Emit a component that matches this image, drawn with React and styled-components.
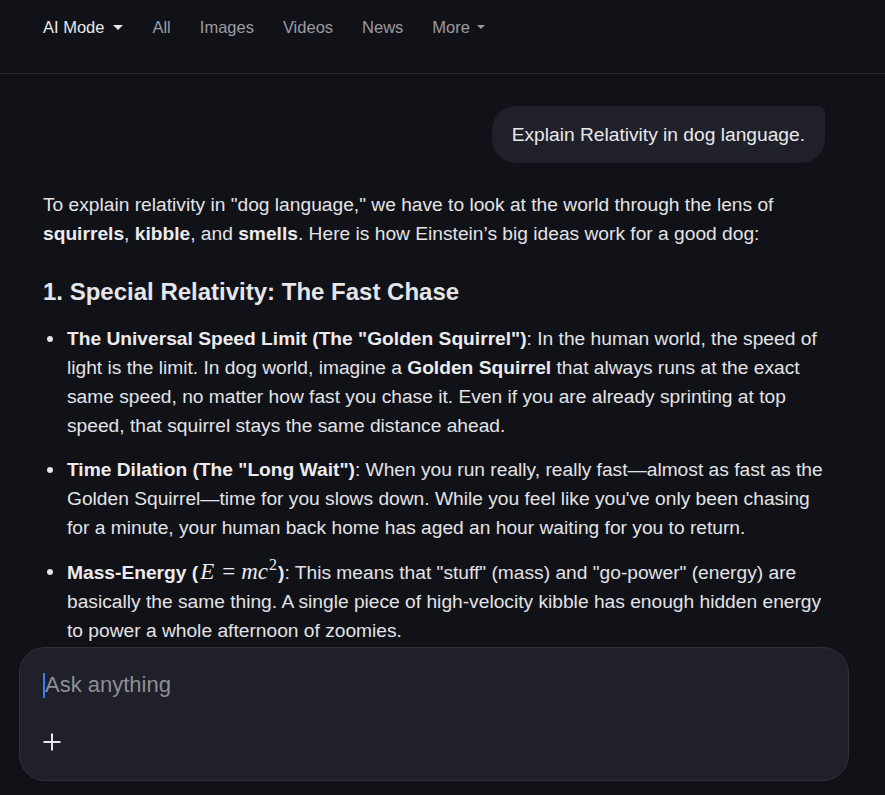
import React from "react";
import styled, { createGlobalStyle } from "styled-components";

const Global = createGlobalStyle`
    html, body {
        margin: 0;
        padding: 0;
        background: #111217;
    }
    body {
        font-family: "Liberation Sans", Arial, sans-serif;
        color: #e6e6ea;
    }
`;

const Page = styled.div`
    display: flex;
    flex-direction: column;
    height: 795px;
    overflow: hidden;
    background: #111217;
`;

const Nav = styled.nav`
    flex: none;
    display: flex;
    align-items: center;
    gap: 29px;
    height: 54px;
    padding: 0 43px 19px;
    border-bottom: 1px solid #2c2d33;
`;

const NavItem = styled.span`
    display: inline-flex;
    align-items: center;
    gap: 7px;
    font-size: 16.5px;
    color: ${p => p.active ? '#e8e8ec' : '#9b9ca3'};
    cursor: pointer;
`;

const Caret = styled.span`
    width: 0;
    height: 0;
    border-left: ${p => p.small ? 4 : 5}px solid transparent;
    border-right: ${p => p.small ? 4 : 5}px solid transparent;
    border-top: ${p => p.small ? 4 : 5}px solid currentColor;
    margin-left: ${p => p.small ? 0 : 2}px;
`;

const Main = styled.main`
    flex: 1;
    overflow: hidden;
    padding: 32px 60px 0 43px;
    display: flex;
    flex-direction: column;
`;

const Bubble = styled.div`
    align-self: flex-end;
    background: #1f2029;
    color: #e8e8ec;
    font-size: 19.2px;
    line-height: 25px;
    padding: 16px 20px;
    border-radius: 24px 6px 24px 24px;
`;

const Para = styled.p`
    margin: 27px 0 0;
    font-size: 19.2px;
    line-height: 29px;
    color: #e3e3e8;

    b { font-weight: 700; color: #ececf0; }
`;

const Heading = styled.h2`
    margin: 28px 0 0;
    font-size: 24px;
    line-height: 32px;
    font-weight: 700;
    color: #e6e6ea;
`;

const List = styled.ul`
    margin: 16px 0 0;
    padding: 0 0 0 24px;
    list-style: none;
`;

const Item = styled.li`
    position: relative;
    font-size: 19.2px;
    line-height: 29px;
    color: #e3e3e8;
    margin-bottom: 15px;

    &::before {
        content: "";
        position: absolute;
        left: -20px;
        top: 12px;
        width: 6px;
        height: 6px;
        border-radius: 50%;
        background: #e3e3e8;
    }
    b { font-weight: 700; color: #ececf0; }
`;

const Math = styled.span`
    font-family: "Liberation Serif", "Times New Roman", serif;
    font-style: italic;
    font-size: 23px;
    font-weight: 400;
    margin: 0 1px 0 2px;

    sup {
        font-style: normal;
        font-size: 16px;
        line-height: 0;
        margin-left: 1px;
    }
    .op { font-style: normal; margin: 0 6px 0 8px; }
`;

const ComposerWrap = styled.div`
    flex: none;
    padding: 0 36px 14px 19px;
`;

const Composer = styled.div`
    height: 134px;
    box-sizing: border-box;
    background: #1f2029;
    border: 1px solid #303139;
    border-radius: 26px;
    padding: 23px 23px 0;
    display: flex;
    flex-direction: column;
`;

const Prompt = styled.div`
    display: flex;
    align-items: center;
    height: 28px;
    font-size: 22px;
    color: #8e8f97;
`;

const Cursor = styled.span`
    width: 2px;
    height: 25px;
    background: #3d7cf2;
`;

const PlusButton = styled.button`
    margin-top: 34px;
    width: 18px;
    height: 18px;
    padding: 0;
    border: 0;
    background: none;
    color: #e8e8ec;
    display: flex;
    align-items: center;
    justify-content: center;
    cursor: pointer;
`;

export default function App(){
    return <Page>
        <Global />
        <Nav>
            <NavItem active>AI Mode <Caret /></NavItem>
            <NavItem>All</NavItem>
            <NavItem>Images</NavItem>
            <NavItem>Videos</NavItem>
            <NavItem>News</NavItem>
            <NavItem>More <Caret small /></NavItem>
        </Nav>
        <Main>
            <Bubble>Explain Relativity in dog language.</Bubble>
            <Para>
                To explain relativity in "dog language," we have to look at the world through the lens of <b>squirrels</b>, <b>kibble</b>, and <b>smells</b>. Here is how Einstein’s big ideas work for a good dog:
            </Para>
            <Heading>1. Special Relativity: The Fast Chase</Heading>
            <List>
                <Item>
                    <b>The Universal Speed Limit (The "Golden Squirrel")</b>: In the human world, the speed of light is the limit. In dog world, imagine a <b>Golden Squirrel</b> that always runs at the exact same speed, no matter how fast you chase it. Even if you are already sprinting at top speed, that squirrel stays the same distance ahead.
                </Item>
                <Item>
                    <b>Time Dilation (The "Long Wait")</b>: When you run really, really fast—almost as fast as the Golden Squirrel—time for you slows down. While you feel like you've only been chasing for a minute, your human back home has aged an hour waiting for you to return.
                </Item>
                <Item>
                    <b>Mass-Energy (<Math>E<span className="op">=</span>mc<sup>2</sup></Math>)</b>: This means that "stuff" (mass) and "go-power" (energy) are basically the same thing. A single piece of high-velocity kibble has enough hidden energy to power a whole afternoon of zoomies.
                </Item>
            </List>
        </Main>
        <ComposerWrap>
            <Composer>
                <Prompt><Cursor />Ask anything</Prompt>
                <PlusButton aria-label="Add">
                    <svg width="18" height="18" viewBox="0 0 18 18">
                        <path d="M9 0.5v17M0.5 9h17" stroke="currentColor" strokeWidth="2" />
                    </svg>
                </PlusButton>
            </Composer>
        </ComposerWrap>
    </Page>
}
